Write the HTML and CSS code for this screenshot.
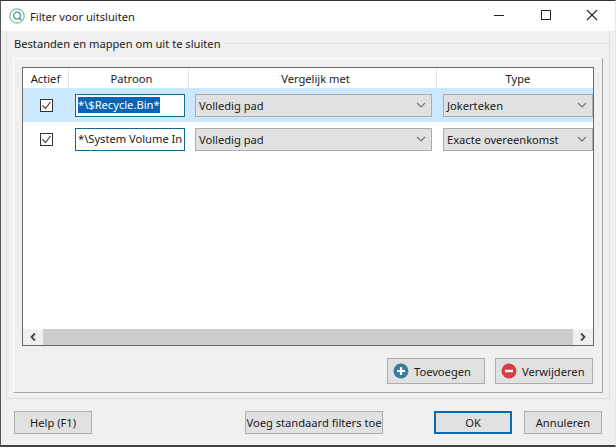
FILE: index.html
```html
<!DOCTYPE html>
<html lang="nl">
<head>
<meta charset="utf-8">
<title>Filter voor uitsluiten</title>
<link rel="stylesheet" href="styles.css">
</head>
<body>
<div class="window">
  <header class="titlebar">
    <svg class="app-icon" width="16" height="16" viewBox="0 0 17 17" fill="none">
      <circle cx="8.5" cy="8.5" r="7.6" stroke="#6cc7a4" stroke-width="1.3"/>
      <circle cx="8.5" cy="8" r="3.6" stroke="#4a9d84" stroke-width="1.4"/>
      <path d="M11 10.6l2.4 2.4" stroke="#4a9d84" stroke-width="1.6"/>
    </svg>
    <span class="title">Filter voor uitsluiten</span>
    <div class="win-controls">
      <svg width="46" height="30" viewBox="0 0 46 30"><path d="M17 14.5h10" stroke="#222" stroke-width="1"/></svg>
      <svg width="46" height="30" viewBox="0 0 46 30"><rect x="18.5" y="9.5" width="9" height="9" fill="none" stroke="#222"/></svg>
      <svg width="46" height="30" viewBox="0 0 46 30"><path d="M18 9l10 10M28 9L18 19" stroke="#222" stroke-width="1.1"/></svg>
    </div>
  </header>

  <main class="content">
    <section class="group">
      <div class="group-label"><span>Bestanden en mappen om uit te sluiten</span></div>
      <div class="panel">
        <div class="table">
          <div class="row head">
            <div class="cell c1">Actief</div>
            <div class="cell c2">Patroon</div>
            <div class="cell c3">Vergelijk met</div>
            <div class="cell c4">Type</div>
          </div>
          <div class="row item selected">
            <div class="cell c1"><span class="check"><svg width="13" height="13" viewBox="0 0 13 13"><path d="M2.5 6.5l3 3 5-6.5" fill="none" stroke="#333" stroke-width="1.1"/></svg></span></div>
            <div class="cell c2"><div class="edit"><span class="sel">*\$Recycle.Bin*</span></div></div>
            <div class="cell c3"><div class="combo"><span>Volledig pad</span><svg width="10" height="6" viewBox="0 0 10 6"><path d="M1 1l4 4 4-4" fill="none" stroke="#777" stroke-width="1.2"/></svg></div></div>
            <div class="cell c4"><div class="combo"><span>Jokerteken</span><svg width="10" height="6" viewBox="0 0 10 6"><path d="M1 1l4 4 4-4" fill="none" stroke="#777" stroke-width="1.2"/></svg></div></div>
          </div>
          <div class="row item">
            <div class="cell c1"><span class="check"><svg width="13" height="13" viewBox="0 0 13 13"><path d="M2.5 6.5l3 3 5-6.5" fill="none" stroke="#333" stroke-width="1.1"/></svg></span></div>
            <div class="cell c2"><div class="edit">*\System Volume In</div></div>
            <div class="cell c3"><div class="combo"><span>Volledig pad</span><svg width="10" height="6" viewBox="0 0 10 6"><path d="M1 1l4 4 4-4" fill="none" stroke="#777" stroke-width="1.2"/></svg></div></div>
            <div class="cell c4"><div class="combo"><span>Exacte overeenkomst</span><svg width="10" height="6" viewBox="0 0 10 6"><path d="M1 1l4 4 4-4" fill="none" stroke="#777" stroke-width="1.2"/></svg></div></div>
          </div>
          <div class="table-fill"></div>
          <div class="hscroll">
            <div class="arrow"><svg width="8" height="10" viewBox="0 0 8 10"><path d="M6 1.5L2.5 5 6 8.5" fill="none" stroke="#444" stroke-width="1.8"/></svg></div>
            <div class="thumb"></div>
            <div class="arrow"><svg width="8" height="10" viewBox="0 0 8 10"><path d="M2 1.5L5.5 5 2 8.5" fill="none" stroke="#444" stroke-width="1.8"/></svg></div>
          </div>
        </div>
        <div class="table-actions">
          <button class="btn action">
            <svg width="16" height="16" viewBox="0 0 16 16"><circle cx="8" cy="8" r="7.5" fill="#3a7d9c"/><path d="M8 4v8M4 8h8" stroke="#fff" stroke-width="2.2"/></svg>
            <span>Toevoegen</span>
          </button>
          <button class="btn action">
            <svg width="16" height="16" viewBox="0 0 16 16"><circle cx="8" cy="8" r="7.5" fill="#d64045"/><path d="M4 8h8" stroke="#fff" stroke-width="2.4"/></svg>
            <span>Verwijderen</span>
          </button>
        </div>
      </div>
    </section>

    <footer class="footer">
      <button class="btn std">Help (F1)</button>
      <button class="btn wide">Voeg standaard filters toe</button>
      <div class="footer-right">
        <button class="btn std default">OK</button>
        <button class="btn std">Annuleren</button>
      </div>
    </footer>
  </main>
</div>
</body>
</html>
```

FILE: styles.css
```css
* { box-sizing: border-box; }
html, body { margin: 0; padding: 0; }
body {
  width: 616px;
  height: 448px;
  overflow: hidden;
  background: #fff;
  font-family: "Noto Sans", "Open Sans", sans-serif;
  font-size: 11.15px;
  color: #1a1a1a;
}
.window {
  width: 616px;
  height: 447px;
  display: flex;
  flex-direction: column;
  border-top: 1px solid #333;
  border-left: 1px solid #555;
  border-bottom: 2px solid #444;
  border-right: 1px solid #e8e8e8;
}
.titlebar {
  height: 30px;
  flex: none;
  display: flex;
  align-items: center;
  background: #fff;
  padding-left: 8px;
  gap: 5px;
}
.title { flex: 1; }
.win-controls { display: flex; }
.win-controls svg { display: block; }
.content {
  flex: 1;
  background: #f0f0f0;
  display: flex;
  flex-direction: column;
  padding: 0 5px 0 5px;
  min-height: 0;
}
.group {
  height: 368px;
  flex: none;
  border-left: 1px solid #e0e0e0;
  border-right: 1px solid #e0e0e0;
  border-bottom: 1px solid #dcdcdc;
  display: flex;
  flex-direction: column;
}
.group-label {
  height: 27px;
  padding: 4px 0 0 7px;
  flex: none;
  line-height: 17px;
  display: flex;
  gap: 4px;
}
.group-label::after {
  content: "";
  flex: 1;
  height: 1px;
  margin-top: 8px;
  background: #e2e2e2;
}
.panel {
  flex: 1;
  margin: 0 6px 5px 6px;
  padding: 8px 8px 6px 8px;
  border-left: 1px solid #fff;
  border-top: 1px solid #fff;
  border-right: 1px solid #a8a8a8;
  border-bottom: 1px solid #a8a8a8;
  display: flex;
  flex-direction: column;
  min-height: 0;
}
.table {
  height: 279px;
  flex: none;
  background: #fff;
  border: 1px solid #696969;
  display: flex;
  flex-direction: column;
}
.row { display: flex; flex: none; }
.head { height: 20px; }
.head .cell {
  display: flex;
  align-items: center;
  justify-content: center;
  border-right: 1px solid #e5e5e5;
}
.head .c4 { border-right: 0; }
.item { height: 34px; }
.item .cell { display: flex; align-items: center; }
.selected { background: #cce8ff; }
.c1 { width: 46px; justify-content: center; }
.c2 { width: 120px; padding-left: 6px; }
.c3 { width: 248px; padding-left: 6px; }
.c4 { flex: 1; padding-left: 6px; min-width: 0; }
.check {
  width: 13px;
  height: 13px;
  border: 1px solid #333;
  background: #fff;
  display: flex;
}
.check svg { margin: -1px; flex: none; }
.edit {
  width: 110px;
  height: 23px;
  background: #fff;
  border: 1px solid #0f6a94;
  padding: 2px 0 0 2px;
  line-height: 16px;
  white-space: nowrap;
  overflow: hidden;
}
.sel { background: #0a64b4; color: #fff; display: inline-block; height: 16px; }
.combo {
  width: 237px;
  height: 23px;
  background: #e1e1e1;
  border: 1px solid #adadad;
  display: flex;
  align-items: center;
  justify-content: space-between;
  padding: 0 5px 0 3px;
}
.c4 .combo { width: 150px; }
.table-fill { flex: 1; }
.hscroll {
  height: 16px;
  flex: none;
  display: flex;
  background: #cdcdcd;
}
.arrow {
  width: 20px;
  flex: none;
  background: #f0f0f0;
  display: flex;
  align-items: center;
  justify-content: center;
}
.thumb { flex: 1; }
.btn {
  font: inherit;
  color: inherit;
  background: #e1e1e1;
  border: 1px solid #adadad;
  padding: 0;
  height: 23px;
  white-space: nowrap;
}
.table-actions {
  display: flex;
  justify-content: flex-end;
  gap: 10px;
  margin-top: 12px;
  margin-right: 1px;
}
.action {
  width: 98px;
  height: 26px;
  display: flex;
  align-items: center;
  gap: 5px;
  padding-left: 5px;
}
.footer {
  display: flex;
  align-items: center;
  margin-top: 12px;
  padding-left: 8px;
}
.std { width: 78px; }
.wide { width: 138px; margin-left: 153px; }
.footer-right { display: flex; gap: 12px; margin-left: 51px; }
.default { border: 2px solid #0b6bb0; }
```
